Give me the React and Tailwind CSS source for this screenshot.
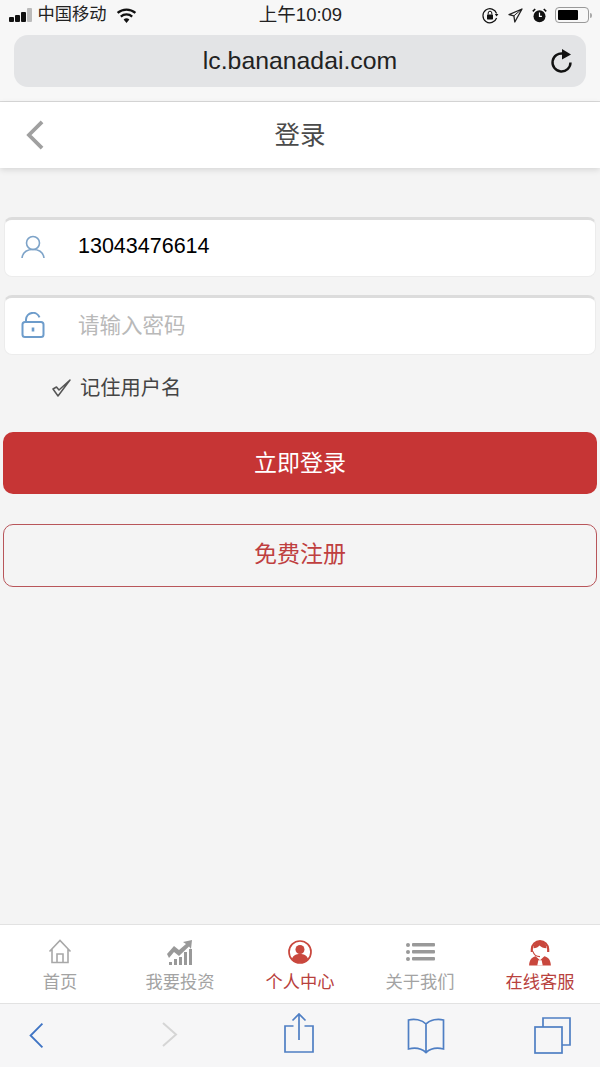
const sans = { fontFamily: '"Liberation Sans", "Noto Sans CJK SC", sans-serif' }

function ChevronLeft({ className, color, width = 3 }) {
  return (
    <svg className={className} viewBox="0 0 20 32" fill="none" stroke={color} strokeWidth={width}>
      <path d="M17 2 3 16l14 14" />
    </svg>
  )
}

function StatusBar() {
  return (
    <div className="flex h-[30px] items-center justify-between pl-[9px] pr-[8px] text-[#222]">
      <div className="flex w-[200px] items-center">
        <div className="flex items-end gap-[1.5px]">
          <span className="h-[5px] w-[4.5px] rounded-[1px] bg-[#111]" />
          <span className="h-[7px] w-[4.5px] rounded-[1px] bg-[#111]" />
          <span className="h-[10px] w-[4.5px] rounded-[1px] bg-[#111]" />
          <span className="h-[14px] w-[4.5px] rounded-[1px] bg-[#bbb]" />
        </div>
        <span className="ml-[6px] text-[17.25px] leading-none">中国移动</span>
        <svg className="ml-[9px]" width="21" height="15" viewBox="0 0 21 15">
          <path d="M10.5 15 7.6 11.6a4.4 4.4 0 0 1 5.8 0z" fill="#111" />
          <path d="M4.8 8.6a8.6 8.6 0 0 1 11.4 0M1.6 4.9a13.5 13.5 0 0 1 17.8 0" fill="none" stroke="#111" strokeWidth="2.3" />
        </svg>
      </div>
      <span className="text-[18.5px] leading-none">上午10:09</span>
      <div className="flex w-[200px] items-center justify-end">
        <svg width="17" height="17" viewBox="0 0 17 17" fill="none">
          <path d="M14.6 6.5A7 7 0 1 0 14.6 11" stroke="#111" strokeWidth="1.2" />
          <path d="m12.8 7 3.6-.1-1.8 2.5z" fill="#111" />
          <rect x="5" y="7.6" width="6" height="4.8" rx=".6" fill="#111" />
          <path d="M6.2 7.6V6a1.8 1.8 0 0 1 3.6 0v1.6" stroke="#111" strokeWidth="1" />
        </svg>
        <svg className="ml-[9px]" width="15" height="15" viewBox="0 0 15 15" fill="none">
          <path d="M14 1 6.8 14l-.9-6.2L1 6.6z" stroke="#222" strokeWidth="1.3" strokeLinejoin="round" />
          <path d="M14 1 5.9 7.8" stroke="#222" strokeWidth="1" />
        </svg>
        <svg className="ml-[9px]" width="15" height="15" viewBox="0 0 15 15">
          <circle cx="7.5" cy="8.2" r="6" fill="#111" />
          <path d="M7.5 4.6v3.8h2.4" stroke="#fff" strokeWidth="1.2" fill="none" />
          <path d="M.8 3.4 3.2 1M14.2 3.4 11.8 1" stroke="#111" strokeWidth="1.6" />
        </svg>
        <div className="ml-[8px] flex h-[16px] w-[34px] items-center rounded-[4px] border border-[#999] p-[2px]">
          <div className="h-full w-[20px] rounded-[1px] bg-black" />
        </div>
        <span className="ml-[1px] h-[5px] w-[2px] rounded-r-sm bg-[#aaa]" />
      </div>
    </div>
  )
}

function AddressBar() {
  return (
    <div className="relative mx-[14px] mt-[5px] flex h-[52px] items-center justify-center rounded-[14px] bg-[#e3e4e6] text-[24.8px] text-[#222]">
      lc.bananadai.com
      <svg className="absolute right-[12px] top-[14px]" width="24" height="26" viewBox="0 0 24 26" fill="none">
        <path d="M20.5 13.5a9 9 0 1 1-7-8.8" stroke="#111" strokeWidth="2.4" />
        <path d="m12 0 9 5.6-9 5z" fill="#111" />
      </svg>
    </div>
  )
}

function Field({ icon, children }) {
  return (
    <div className="mx-[4px] flex h-[60px] items-center rounded-[8px] border-x border-b border-[#ececec] border-t-[3px] border-t-[#dcdcdc] bg-white pb-[3px]">
      <div className="flex w-[73px] shrink-0 justify-center pr-[17px]">{icon}</div>
      {children}
    </div>
  )
}

function HomeIcon() {
  return (
    <svg className="mt-[-2px]" width="24" height="25" viewBox="0 0 24 25" fill="none" stroke="#a8a8a8" strokeWidth="1.6">
      <path d="M1.5 12.5 12 1.5l10.5 11M4 10v13.5h16V10" />
      <path d="M9 23.5V15h6v8.5" />
    </svg>
  )
}

function ChartIcon() {
  return (
    <svg width="26" height="25" viewBox="0 0 26 25" fill="#999">
      <path d="M2 25v-3h3v3zM7 25v-6h3v6zM12 25v-8h3v8zM17 25V12h3v13zM22 25V9h3v16z" />
      <path d="M0 14 7 6l5 4 7-6-3-2 9-2-1 9-2-2.500L12 16l-5-4-5 6z" />
    </svg>
  )
}

function PersonIcon() {
  return (
    <svg width="24" height="24" viewBox="0 0 24 24">
      <circle cx="12" cy="12" r="11" fill="#fff" stroke="#c9473d" strokeWidth="1.7" />
      <circle cx="12" cy="9.5" r="4.5" fill="#c9473d" />
      <path d="M3.8 19c1.500-3.800 4.500-5 8.200-5s6.700 1.200 8.200 5a11 11 0 0 1-16.400 0z" fill="#c9473d" />
    </svg>
  )
}

function ListIcon() {
  return (
    <svg width="29" height="20" viewBox="0 0 29 20" fill="#999">
      <circle cx="2" cy="3" r="2" />
      <circle cx="2" cy="10" r="2" />
      <circle cx="2" cy="17" r="2" />
      <rect x="6" y="1" width="23" height="3.5" rx="1" />
      <rect x="6" y="8" width="23" height="3.5" rx="1" />
      <rect x="6" y="15" width="23" height="3.5" rx="1" />
    </svg>
  )
}

function AgentIcon() {
  return (
    <svg width="24" height="27" viewBox="0 3 22 24">
      <path d="M2.500 12a8.500 8.500 0 0 1 17 0v2.500h-2V12a6.500 6.500 0 0 0-13 0v2.500h-2z" fill="#c9473d" />
      <path d="M5 11c0-4 3-6 6-6s6 2 6 6c-3 0-5-1-6.500-2.500C9.500 10 7.500 11 5 11z" fill="#c9473d" />
      <path d="M4.500 14c1 3.500 3.500 4.800 6.500 4.800" fill="none" stroke="#c9473d" strokeWidth="1" />
      <path d="M1 27c.3-5 2-7.500 6-8.500l4 3.500 4-3.500c4 1 5.700 3.500 6 8.500z" fill="#c9473d" />
      <path d="M9.500 22h3l1 5h-5z" fill="#fff" />
    </svg>
  )
}

const tabs = [
  { label: '首页', icon: <HomeIcon />, active: false },
  { label: '我要投资', icon: <ChartIcon />, active: false },
  { label: '个人中心', icon: <PersonIcon />, active: true },
  { label: '关于我们', icon: <ListIcon />, active: false },
  { label: '在线客服', icon: <AgentIcon />, active: true },
]

function TabBar() {
  return (
    <div className="grid h-[80px] grid-cols-5 border-y border-[#e2e2e2] bg-white pt-[14px]">
      {tabs.map((tab) => (
        <div key={tab.label} className="flex flex-col items-center">
          <div className="flex h-[26px] items-center justify-center">{tab.icon}</div>
          <span className={`mt-[5px] text-[17.25px] leading-[24px] ${tab.active ? 'text-[#b8413d]' : 'text-[#a3a3a3]'}`}>
            {tab.label}
          </span>
        </div>
      ))}
    </div>
  )
}

function SafariBar() {
  return (
    <div className="flex h-[63px] items-start bg-[#f6f6f7] pl-[28px] pt-[15px]">
      <ChevronLeft className="mt-[3px] h-[27px] w-[17px]" color="#3f74c4" width={2.2} />
      <svg className="ml-[116px] mt-[3px]" width="17" height="25" viewBox="0 0 17 25" fill="none" stroke="#d5d5d5" strokeWidth="2">
        <path d="m2 1 13 11.5L2 24" />
      </svg>
      <svg className="ml-[106px] mt-[-6px]" width="30" height="40" viewBox="0 0 30 40" fill="none" stroke="#4f7fc4" strokeWidth="1.7">
        <path d="M9.500 13H1v26h28V13h-8.500M15 27V1.500M8.500 7.500 15 1l6.500 6.500" />
      </svg>
      <svg className="ml-[93px] mt-[-1px]" width="38" height="36" viewBox="0 0 38 36" fill="none" stroke="#4f7fc4" strokeWidth="1.7">
        <path d="M19 6C15 1.500 7 .5 1.500 2v29c6-1.500 13-.5 17.500 3.500 4.500-4 11.500-5 17.500-3.500V2C31 .5 23 1.500 19 6zM19 6v28" />
      </svg>
      <svg className="ml-[89px] mt-[-2px]" width="37" height="37" viewBox="0 0 37 37" fill="none" stroke="#4f7fc4" strokeWidth="1.7">
        <rect x="1" y="10" width="27" height="26" />
        <path d="M9 10V1h27v27h-8" />
      </svg>
    </div>
  )
}

export default function App() {
  return (
    <div className="flex h-[1067px] w-[600px] flex-col overflow-hidden bg-[#f4f4f4]" style={sans}>
      <div className="h-[102px] shrink-0 border-b border-[#d9d9d9] bg-[#f7f7f7]">
        <StatusBar />
        <AddressBar />
      </div>

      <div className="relative flex h-[66px] shrink-0 items-center justify-center bg-white text-[25.5px] text-[#4a4a4a] shadow-[0_2px_6px_rgba(0,0,0,0.12)]">
        <ChevronLeft className="absolute left-[26px] top-[18px] h-[30px] w-[19px]" color="#a0a0a0" width={4} />
        登录
      </div>

      <div className="flex-1">
        <div className="mt-[49px] flex flex-col gap-[18px]">
          <Field
            icon={
              <svg width="24" height="24" viewBox="0 0 24 24" fill="none" stroke="#7da3c8" strokeWidth="1.6">
                <circle cx="12" cy="8" r="6.5" />
                <path d="M1 23c.8-5.500 5-8.500 11-8.500S22.200 17.500 23 23" />
              </svg>
            }
          >
            <span className="text-[21.5px] text-black">13043476614</span>
          </Field>
          <Field
            icon={
              <svg width="24" height="26" viewBox="0 0 24 26" fill="none" stroke="#6d9ccb" strokeWidth="2">
                <rect x="1.500" y="10" width="21" height="15" rx="2.500" />
                <path d="M5 10V7.500a7 7 0 0 1 13.500-2.200" />
                <path d="M12 15.500v4" strokeWidth="2.600" />
              </svg>
            }
          >
            <span className="mt-[3px] text-[21.5px] text-[#b9b9b9]">请输入密码</span>
          </Field>
        </div>

        <div className="mt-[20px] flex h-[26px] items-center pl-[52px] text-[20.25px] text-[#444]">
          <svg width="19" height="18" viewBox="0 0 19 18" fill="none" stroke="#555" strokeWidth="1.5">
            <path d="m1 10 5 7L18 1 7 11 4.500 8z" strokeLinejoin="round" />
          </svg>
          <span className="ml-[9px]">记住用户名</span>
        </div>

        <button className="mx-[3px] mt-[31px] block h-[62px] w-[594px] rounded-[10px] bg-[#c63535] text-[23px] text-white">
          立即登录
        </button>
        <button className="mx-[3px] mt-[30px] block h-[63px] w-[594px] rounded-[10px] border-[1.5px] border-[#b8555a] pb-[2px] text-[23px] text-[#bf3f3f]">
          免费注册
        </button>
      </div>

      <div className="shrink-0">
        <TabBar />
        <SafariBar />
      </div>
    </div>
  )
}
